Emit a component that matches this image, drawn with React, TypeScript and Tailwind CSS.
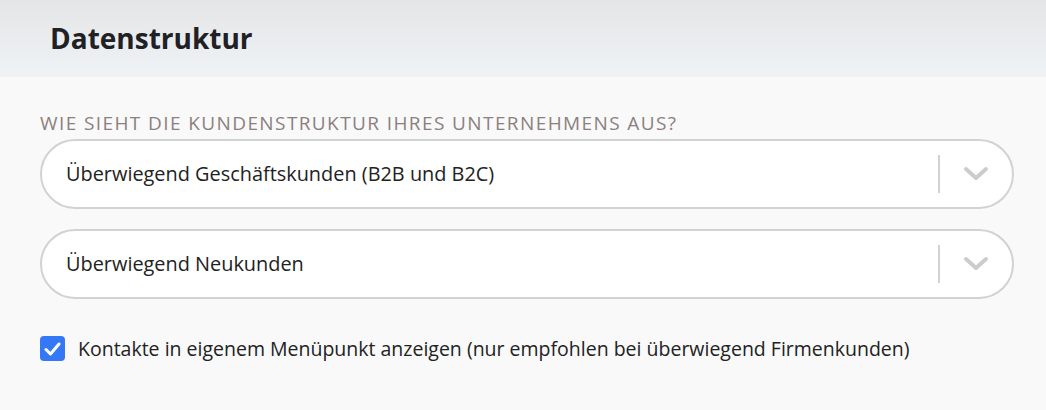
import React from "react";

function Chevron() {
  return (
    <svg width="28" height="16" viewBox="0 0 28 16" fill="none">
      <path d="M4 3 L14 12 L24 3" stroke="#cccccc" strokeWidth="4" strokeLinecap="round" strokeLinejoin="round" />
    </svg>
  );
}

function Select({ value }: { value: string }) {
  return (
    <div className="flex h-[70px] items-center rounded-full border-2 border-[#d2d2d2] bg-white pl-[24px] pr-[22px]">
      <span className="flex-1 text-[19.9px] text-[#222]">{value}</span>
      <div className="h-[38px] w-[2px] bg-[#d2d2d2]" />
      <div className="ml-[22px] flex items-center">
        <Chevron />
      </div>
    </div>
  );
}

export default function App() {
  return (
    <div className="h-[410px] w-[1046px] bg-[#f9f9f9]" style={{ fontFamily: "'Open Sans', sans-serif" }}>
      <div className="flex h-[77px] items-center bg-gradient-to-b from-[#e4e5e6] to-[#eff3f6] pl-[50px] pb-[1px]">
        <h1 className="text-[28px] font-bold text-[#1f2125]">Datenstruktur</h1>
      </div>
      <div className="pl-[40px] pr-[32px] pt-[35px]">
        <div className="mb-[5px] text-[19px] leading-[22px] tracking-[1.4px] text-[#8b8080]">
          WIE SIEHT DIE KUNDENSTRUKTUR IHRES UNTERNEHMENS AUS?
        </div>
        <div className="flex flex-col gap-[20px]">
          <Select value="Überwiegend Geschäftskunden (B2B und B2C)" />
          <Select value="Überwiegend Neukunden" />
        </div>
        <label className="mt-[37px] flex items-center gap-[13px]">
          <span className="flex h-[25px] w-[25px] items-center justify-center rounded-[4px] bg-[#3478f6]">
            <svg width="17" height="14" viewBox="0 0 17 14" fill="none">
              <path d="M2 7.5 L6.5 12 L15 2" stroke="white" strokeWidth="3" strokeLinecap="round" strokeLinejoin="round" />
            </svg>
          </span>
          <span className="text-[19.5px] leading-[25px] text-[#222]">
            Kontakte in eigenem Menüpunkt anzeigen (nur empfohlen bei überwiegend Firmenkunden)
          </span>
        </label>
      </div>
    </div>
  );
}
